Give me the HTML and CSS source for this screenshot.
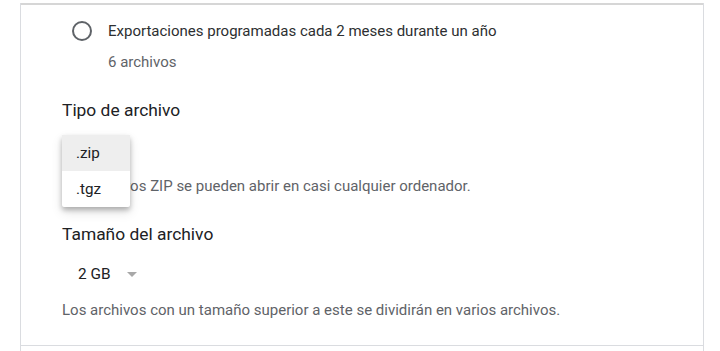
FILE: index.html
```html
<!DOCTYPE html>
<html lang="es">
<head>
<meta charset="utf-8">
<title>Exportar</title>
<link rel="stylesheet" href="styles.css">
</head>
<body>
<div class="card">
  <div class="rule-top"></div>
  <div class="content">
    <div class="radio-row">
      <span class="radio"></span>
      <span class="radio-label">Exportaciones programadas cada 2 meses durante un año</span>
    </div>
    <div class="sub">6 archivos</div>

    <h3 class="title first">Tipo de archivo</h3>
    <div class="select-wrap">
      <div class="select select-open"><span class="select-value">.zip</span><span class="caret"></span></div>
      <ul class="menu">
        <li class="menu-item active">.zip</li>
        <li class="menu-item">.tgz</li>
      </ul>
    </div>
    <p class="help help-type">Los archivos ZIP se pueden abrir en casi cualquier ordenador.</p>

    <h3 class="title">Tamaño del archivo</h3>
    <div class="select select-size"><span class="select-value">2 GB</span><span class="caret"></span></div>
    <p class="help help-size">Los archivos con un tamaño superior a este se dividirán en varios archivos.</p>
  </div>
  <div class="rule-bottom"></div>
</div>
</body>
</html>
```
FILE: styles.css
```css
* { box-sizing: border-box; }
html, body { margin: 0; padding: 0; background: #ffffff; }
body {
  font-family: Roboto, "Liberation Sans", Arial, sans-serif;
  color: #202124;
  width: 720px;
  height: 351px;
  overflow: hidden;
}
.card {
  margin: 0 16px 0 20px;
  height: 351px;
  border-left: 1px solid #dadce0;
  border-right: 1px solid #dadce0;
}
.rule-top {
  margin-top: 3px;
  height: 2px;
  background: #d6d6d6;
}
.content {
  padding: 16px 0 25px 41px;
}
.radio-row {
  display: flex;
  align-items: center;
  height: 20px;
  padding-left: 10px;
  gap: 16px;
}
.radio {
  width: 20px;
  height: 20px;
  border: 2px solid #5f6368;
  border-radius: 50%;
  flex: none;
}
.radio-label {
  font-size: 15px;
  line-height: 20px;
  color: #2d2f31;
}
.sub {
  margin-top: 11px;
  padding-left: 46px;
  font-size: 15px;
  line-height: 20px;
  color: #5f6368;
}
.title {
  margin: 26px 0 0 0;
  font-size: 17.4px;
  line-height: 24px;
  font-weight: 400;
  color: #202124;
}
.select-wrap {
  position: relative;
  margin-top: 20px;
}
.select {
  display: flex;
  align-items: center;
  height: 20px;
  padding-left: 16px;
  gap: 16px;
  font-size: 15.4px;
  line-height: 20px;
  color: #202124;
}
.select-open { visibility: hidden; }
.select-size { margin-top: 18px; }
.caret {
  width: 0;
  height: 0;
  border-left: 5.5px solid transparent;
  border-right: 5.5px solid transparent;
  border-top: 5.5px solid #a8a8a8;
}
.menu {
  position: absolute;
  top: -7px;
  left: 0;
  width: 68px;
  margin: 0;
  padding: 0;
  list-style: none;
  background: #ffffff;
  border-radius: 2px;
  box-shadow: 0 3px 5px rgba(0,0,0,0.25), 0 5px 12px rgba(0,0,0,0.12);
  z-index: 2;
}
.menu-item {
  height: 36px;
  line-height: 36px;
  padding-left: 14px;
  font-size: 15.2px;
  color: #202124;
}
.menu-item.active { background: #eeeeee; }
.help {
  margin: 0;
  font-size: 15px;
  line-height: 20px;
  color: #5f6368;
}
.help-type { margin-top: 14px; }
.help-size { margin-top: 16px; }
.rule-bottom {
  height: 1px;
  background: #dadce0;
}
```
